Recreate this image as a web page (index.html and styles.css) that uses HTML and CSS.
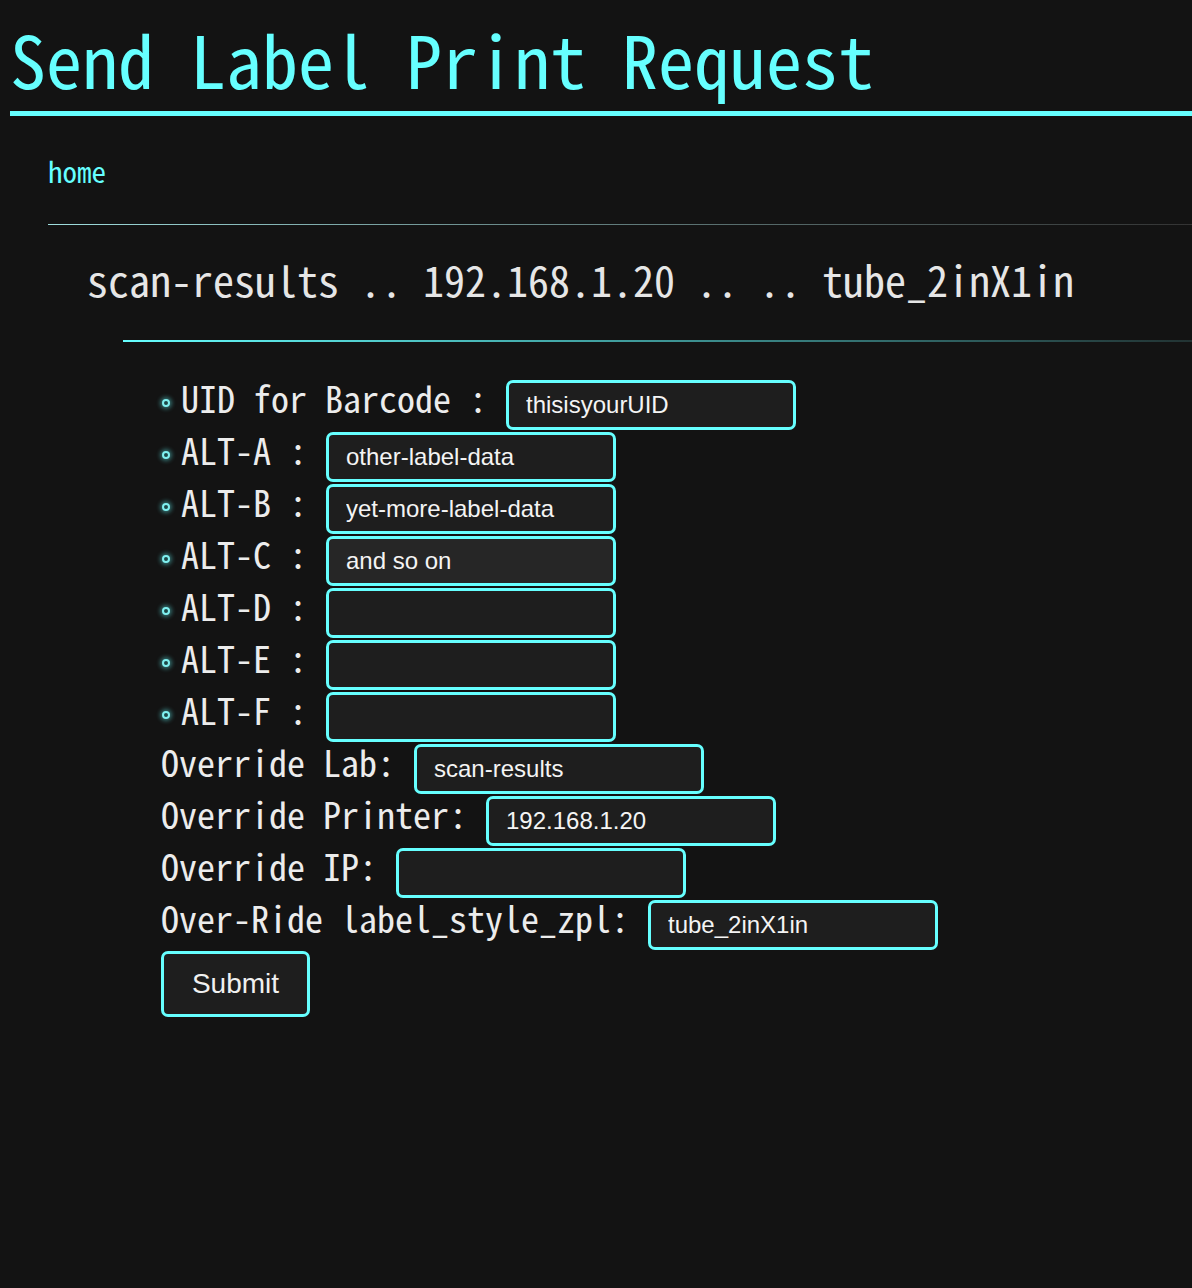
FILE: index.html
```html
<!DOCTYPE html>
<html lang="en">
<head>
<meta charset="utf-8">
<title>Send Label Print Request</title>
<link rel="stylesheet" href="styles.css">
</head>
<body>
<h1 class="title">Send Label Print Request</h1>
<div class="level1">
  <a class="home" href="#">home</a>
  <hr class="rule-a">
  <div class="level2">
    <h2 class="context">scan-results .. 192.168.1.20 .. .. tube_2inX1in</h2>
    <div class="level3">
      <hr class="rule-b">
      <form class="print-form">
        <ul class="fields">
          <li class="row"><span class="lbl bullet">UID for Barcode :</span><input class="field" type="text" value="thisisyourUID"></li>
          <li class="row"><span class="lbl bullet">ALT-A :</span><input class="field" type="text" value="other-label-data"></li>
          <li class="row"><span class="lbl bullet">ALT-B :</span><input class="field" type="text" value="yet-more-label-data"></li>
          <li class="row"><span class="lbl bullet">ALT-C :</span><input class="field focused" type="text" value="and so on"></li>
          <li class="row"><span class="lbl bullet">ALT-D :</span><input class="field" type="text" value=""></li>
          <li class="row"><span class="lbl bullet">ALT-E :</span><input class="field" type="text" value=""></li>
          <li class="row"><span class="lbl bullet">ALT-F :</span><input class="field" type="text" value=""></li>
        </ul>
        <div class="row"><span class="lbl">Override Lab:</span><input class="field" type="text" value="scan-results"></div>
        <div class="row"><span class="lbl">Override Printer:</span><input class="field" type="text" value="192.168.1.20"></div>
        <div class="row"><span class="lbl">Override IP:</span><input class="field" type="text" value=""></div>
        <div class="row"><span class="lbl">Over-Ride label_style_zpl:</span><input class="field" type="text" value="tube_2inX1in"></div>
        <button class="submit" type="button">Submit</button>
      </form>
    </div>
  </div>
</div>
</body>
</html>
```
FILE: styles.css
```css
html, body {
  background: #131313;
}
body {
  margin: 0 0 0 10px;
  color: #ececec;
  font-family: "Noto Sans Mono CJK JP", "DejaVu Sans Mono", monospace;
  overflow-x: hidden;
}
.title {
  margin: 0;
  padding: 20px 0 15px 0;
  font-size: 72px;
  line-height: 76px;
  font-weight: normal;
  color: #6ff;
  border-bottom: 5px solid #6ff;
  white-space: nowrap;
}
.level1 {
  margin-left: 38px;
  padding-top: 36px;
}
.home {
  display: block;
  font-size: 29px;
  line-height: 36px;
  color: #6ff;
  text-decoration: none;
}
.rule-a {
  margin: 36px 0 0 0;
  border: 0;
  height: 1px;
  background: linear-gradient(to right, #9fdede, #6a8a8a 40%, #333 100%);
}
.level2 {
  margin-left: 38px;
}
.context {
  margin: 0;
  padding: 26px 0 33px 1px;
  font-size: 42px;
  line-height: 56px;
  font-weight: normal;
  color: #e6e6e6;
  white-space: nowrap;
}
.level3 {
  margin-left: 37px;
}
.rule-b {
  margin: 0;
  border: 0;
  height: 2px;
  background: linear-gradient(to right, #6ff, #4aa 40%, #233 100%);
}
.print-form {
  margin-left: 38px;
  padding-top: 38px;
}
.fields {
  list-style: none;
  margin: 0;
  padding: 0;
}
.row {
  display: flex;
  align-items: baseline;
  height: 50px;
  margin-bottom: 2px;
  font-size: 36px;
  white-space: pre;
}
.lbl {
  margin-right: 19px;
  line-height: 35px;
}
.bullet::before {
  content: "";
  display: inline-block;
  vertical-align: middle;
  width: 4px;
  height: 4px;
  margin: 0 11px 0 1px;
  border: 2px solid #7ff0f0;
  border-radius: 50%;
  background: #1d4747;
  box-shadow: 0 0 4px 2px rgba(102, 255, 255, 0.4);
}
.field {
  box-sizing: border-box;
  width: 290px;
  height: 50px;
  padding: 0 17px;
  border: 3px solid #6ff;
  border-radius: 7px;
  background: #1e1e1e;
  color: #f4f4f4;
  font-family: "Liberation Sans", Arial, sans-serif;
  font-size: 24px;
  outline: none;
}
.field.focused {
  background: #262626;
}
.submit {
  box-sizing: border-box;
  display: block;
  width: 149px;
  height: 66px;
  margin-top: -1px;
  padding: 0;
  border: 3px solid #6ff;
  border-radius: 7px;
  background: #1e1e1e;
  color: #f0f0f0;
  font-family: "Liberation Sans", Arial, sans-serif;
  font-size: 28px;
}
```
